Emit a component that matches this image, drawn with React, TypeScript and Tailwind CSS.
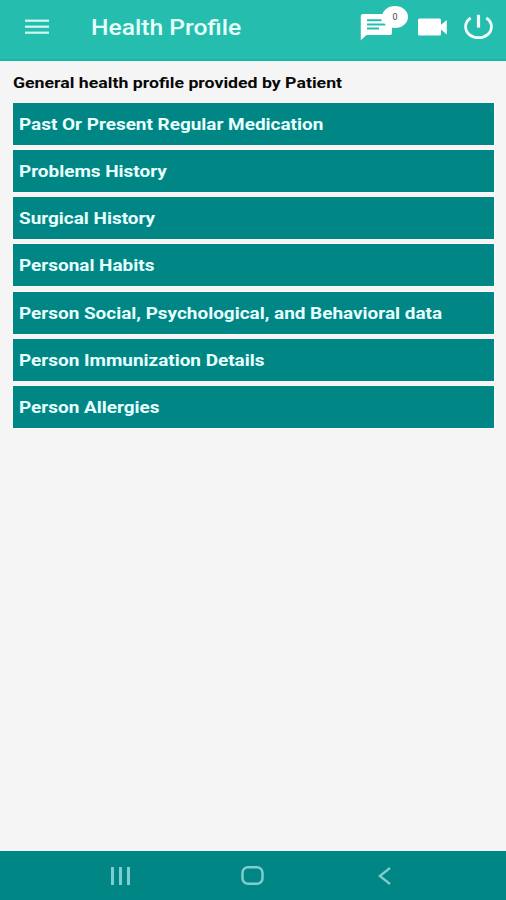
const sections = [
  "Past Or Present Regular Medication",
  "Problems History",
  "Surgical History",
  "Personal Habits",
  "Person Social, Psychological, and Behavioral data",
  "Person Immunization Details",
  "Person Allergies",
];

const MenuIcon = () => (
  <svg width="24" height="16" viewBox="0 0 24 16" fill="#cffaf2" aria-hidden="true">
    <rect y="0.6" width="24" height="2.2" />
    <rect y="6.6" width="24" height="2.2" />
    <rect y="12.6" width="24" height="2.2" />
  </svg>
);

const ChatIcon = () => (
  <svg width="32" height="27" viewBox="0 0 32 27" aria-hidden="true">
    <path
      fill="#fff"
      d="M2.5 0H30a2 2 0 0 1 2 2v17a2 2 0 0 1-2 2H6.5l-5.7 5.2V2a2 2 0 0 1 1.7-2z"
    />
    <path
      stroke="#25beae"
      strokeWidth="2"
      d="M7 6.2h14.5M7 10.5h18.5M7 14.6h12"
    />
  </svg>
);

const VideoIcon = () => (
  <svg width="29" height="18" viewBox="0 0 29 18" fill="#fff" aria-hidden="true">
    <path d="M1.5 0.6h20A1.5 1.5 0 0 1 23 2.1v4.7L28.8 2v14.5L23 11.6v4.4a1.5 1.5 0 0 1-1.5 1.5h-20A1.5 1.5 0 0 1 0 16V2.1A1.5 1.5 0 0 1 1.5 0.6z" />
  </svg>
);

const PowerIcon = () => (
  <svg
    width="30"
    height="26"
    viewBox="0 0 30 26"
    fill="none"
    stroke="#f4fffd"
    aria-hidden="true"
  >
    <path strokeWidth="3.2" d="M15.5 0.8v12.8" />
    <path
      strokeWidth="2.8"
      d="M7.7 4C4.2 6.2 2.6 9.4 2.6 12.8C2.6 19.2 8.3 23.7 15.5 23.7S28.4 19.2 28.4 12.8C28.4 9.4 26.8 6.2 23.3 4"
    />
  </svg>
);

const Header = () => (
  <header className="flex h-[61px] shrink-0 items-start border-b-2 border-[#1bb3a4] bg-[#25beae]">
    <button type="button" aria-label="Menu" className="ml-[25px] mt-[19px] w-6">
      <MenuIcon />
    </button>
    <h1 className="ml-[42px] mt-3.5 w-[269px] origin-left scale-x-[1.12] whitespace-nowrap text-[22px] leading-7 font-medium text-[#e6fffb]">
      Health Profile
    </h1>
    <div className="relative mt-3.5">
      <ChatIcon />
      <span className="absolute -top-2 left-[22px] flex h-[22px] w-[26px] items-center justify-center rounded-[50%] bg-white text-[9px] leading-none text-[#444]">
        0
      </span>
    </div>
    <div className="ml-[26px] mt-[18px]">
      <VideoIcon />
    </div>
    <div className="ml-4 mt-3.5">
      <PowerIcon />
    </div>
  </header>
);

const NavBar = () => (
  <nav className="flex h-[49px] shrink-0 items-center bg-[#008785] text-[#80ccce]">
    <svg
      className="ml-[110px]"
      width="21"
      height="18"
      viewBox="0 0 21 18"
      fill="currentColor"
      aria-hidden="true"
    >
      <rect x="1" width="3" height="18" />
      <rect x="9" width="3" height="18" />
      <rect x="17" width="3" height="18" />
    </svg>
    <svg
      className="ml-[110px]"
      width="23"
      height="19"
      viewBox="0 0 23 19"
      fill="none"
      stroke="currentColor"
      strokeWidth="2.5"
      aria-hidden="true"
    >
      <rect x="1.5" y="1.3" width="20" height="16.4" rx="5.5" />
    </svg>
    <svg
      className="ml-[114px]"
      width="13"
      height="18"
      viewBox="0 0 13 18"
      fill="none"
      stroke="currentColor"
      strokeWidth="2.3"
      aria-hidden="true"
    >
      <path d="M12 1L1.8 9L12 17" />
    </svg>
  </nav>
);

export default function App() {
  return (
    <div className="flex h-[900px] w-[506px] flex-col overflow-hidden bg-[#f5f5f5] font-['Roboto',sans-serif]">
      <Header />
      <main className="flex-1 pr-3 pl-[12.5px] pt-3">
        <h2 className="w-fit origin-left scale-x-[1.18] whitespace-nowrap text-[15px] leading-5 font-bold text-[#080808]">
          General health profile provided by Patient
        </h2>
        <ul className="mt-[9.5px] flex flex-col gap-[5.3px]">
          {sections.map((label) => (
            <li
              key={label}
              className="flex h-[42px] items-center bg-[#008785] pt-0.5 pl-1.5 outline-1 outline-white/60"
            >
              <span className="origin-left scale-x-[1.183] whitespace-nowrap text-[16px] font-bold text-[#e8ffff]">
                {label}
              </span>
            </li>
          ))}
        </ul>
      </main>
      <NavBar />
    </div>
  );
}
